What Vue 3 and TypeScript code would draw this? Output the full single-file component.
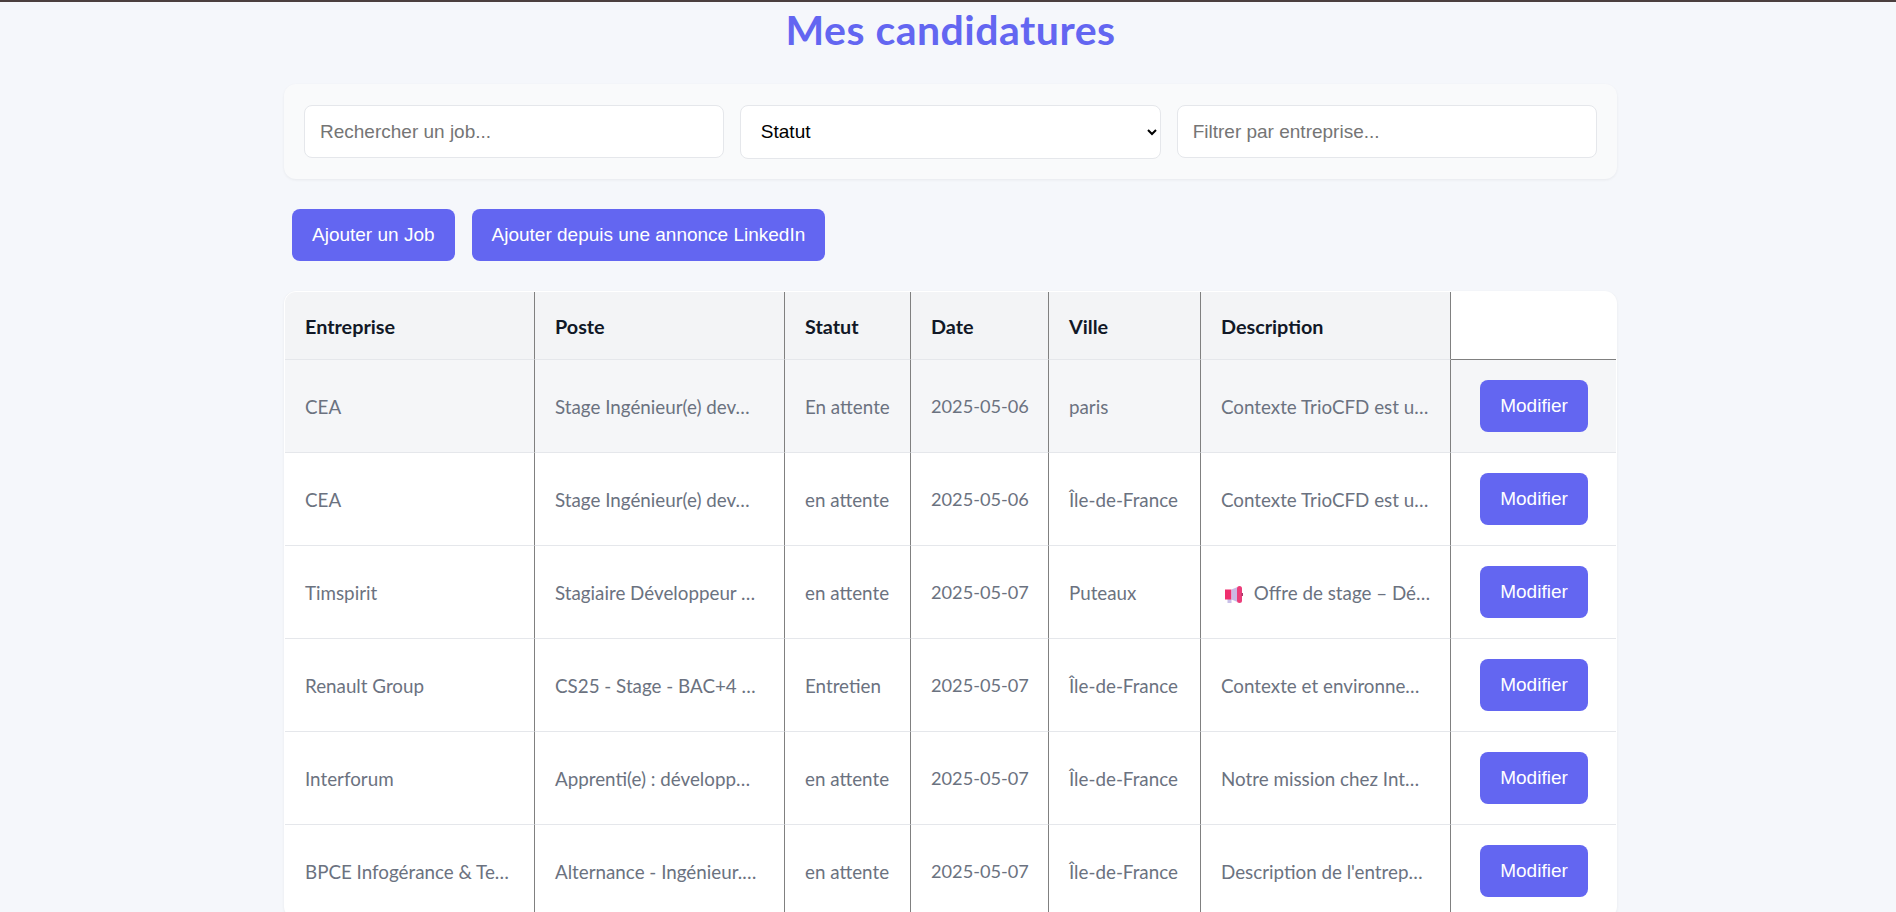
<script setup lang="ts">
interface Job { company: string; role: string; status: string; date: string; city: string; desc: string; icon?: boolean }
const jobs: Job[] = [
  { company: 'CEA', role: 'Stage Ingénieur(e) dev…', status: 'En attente', date: '2025-05-06', city: 'paris', desc: 'Contexte TrioCFD est u…' },
  { company: 'CEA', role: 'Stage Ingénieur(e) dev…', status: 'en attente', date: '2025-05-06', city: 'Île-de-France', desc: 'Contexte TrioCFD est u…' },
  { company: 'Timspirit', role: 'Stagiaire Développeur …', status: 'en attente', date: '2025-05-07', city: 'Puteaux', desc: 'Offre de stage – Dé…', icon: true },
  { company: 'Renault Group', role: 'CS25 - Stage - BAC+4 …', status: 'Entretien', date: '2025-05-07', city: 'Île-de-France', desc: 'Contexte et environne…' },
  { company: 'Interforum', role: 'Apprenti(e) : développ…', status: 'en attente', date: '2025-05-07', city: 'Île-de-France', desc: 'Notre mission chez Int…' },
  { company: 'BPCE Infogérance & Te…', role: 'Alternance - Ingénieur.…', status: 'en attente', date: '2025-05-07', city: 'Île-de-France', desc: "Description de l'entrep…" },
]
</script>

<template>
  <div class="page">
    <div class="topline"></div>
    <h1 class="title">Mes candidatures</h1>
    <main class="wrap">
      <section class="filters">
        <input class="field" type="text" placeholder="Rechercher un job..." />
        <select class="field select">
          <option>Statut</option>
          <option>En attente</option>
          <option>Entretien</option>
        </select>
        <input class="field" type="text" placeholder="Filtrer par entreprise..." />
      </section>
      <div class="actions">
        <button class="btn" type="button">Ajouter un Job</button>
        <button class="btn" type="button">Ajouter depuis une annonce LinkedIn</button>
      </div>
      <div class="table-card">
        <table class="jobs">
          <colgroup>
            <col class="c1" /><col class="c2" /><col class="c3" /><col class="c4" /><col class="c5" /><col class="c6" /><col class="c7" />
          </colgroup>
          <thead>
            <tr>
              <th>Entreprise</th><th>Poste</th><th>Statut</th><th>Date</th><th>Ville</th><th>Description</th><th class="blank"></th>
            </tr>
          </thead>
          <tbody>
            <tr v-for="(job, i) in jobs" :key="i" :class="{ shaded: i === 0 }">
              <td>{{ job.company }}</td>
              <td>{{ job.role }}</td>
              <td>{{ job.status }}</td>
              <td class="date">{{ job.date }}</td>
              <td>{{ job.city }}</td>
              <td>
                <svg v-if="job.icon" class="horn" viewBox="0 0 18 17" aria-hidden="true">
                  <rect x="2.5" y="13" width="4" height="4" fill="#c9c0e8" />
                  <rect x="0" y="3.5" width="6.5" height="10" fill="#ef2f6e" />
                  <path d="M6.5 3.5L12.5 1V16L6.5 13.5Z" fill="#cbb8e4" />
                  <rect x="12" y="0" width="5" height="17" rx="2.5" fill="#ec3d7a" />
                  <rect x="16.5" y="7" width="1.5" height="3" fill="#a83a6a" />
                </svg>
                {{ job.desc }}
              </td>
              <td class="cta"><button class="btn" type="button">Modifier</button></td>
            </tr>
          </tbody>
        </table>
      </div>
    </main>
  </div>
</template>

<style scoped>
.page {
  height: 912px;
  overflow: hidden;
  background: #f5f7fb;
  font-family: Lato, "Open Sans", sans-serif;
}
.topline { height: 2px; background: #4b3f3f; }
.title {
  margin: 0;
  padding: 2px 0 0 5px;
  text-align: center;
  color: #6366f1;
  font-size: 41px;
  line-height: 52px;
  font-weight: 700;
  letter-spacing: 0.5px;
}
.wrap { width: 1333px; margin: 28px 0 0 284px; }
.filters {
  display: flex;
  align-items: center;
  gap: 15.5px;
  height: 95px;
  padding: 0 20px;
  box-sizing: border-box;
  background: #f9fafb;
  border-radius: 12px;
  box-shadow: 0 1px 3px rgba(0, 0, 0, 0.06);
}
.field {
  flex: 1 1 0;
  min-width: 0;
  height: 53px;
  box-sizing: border-box;
  padding: 0 15px;
  background: #fff;
  border: 1px solid #e5e7eb;
  border-radius: 8px;
  font: 19px "Liberation Sans", Arial, sans-serif;
  color: #000;
  outline: none;
}
.field::placeholder { color: #757575; opacity: 1; }
.select { height: 54px; padding-left: 16px; }
.actions { display: flex; gap: 17px; margin: 30px 0 30px 8px; }
.btn {
  height: 52px;
  padding: 0 20px;
  border: 0;
  border-radius: 8px;
  background: #6366f1;
  color: #fff;
  font: 19px "Liberation Sans", Arial, sans-serif;
}
.table-card {
  background: #fff;
  border: 1px solid #fff;
  border-radius: 12px;
  overflow: hidden;
  box-shadow: 0 1px 3px rgba(0, 0, 0, 0.06);
}
.jobs { width: 1331px; table-layout: fixed; border-collapse: separate; border-spacing: 0; font-size: 18.8px; }
.c1 { width: 250px; } .c2 { width: 250px; } .c3 { width: 126px; } .c4 { width: 138px; }
.c5 { width: 152px; } .c6 { width: 250px; } .c7 { width: 165px; }
th, td {
  padding: 0 20px;
  text-align: left;
  white-space: nowrap;
  border-right: 1px solid #808080;
  border-bottom: 1px solid #e5e7eb;
}
th:last-child, td:last-child { border-right: 0; }
th {
  height: 67px;
  background: #f3f4f6;
  color: #111827;
  font-size: 19.8px;
  font-weight: 700;
}
th.blank { background: #fff; border-bottom-color: #808080; }
td { height: 92px; color: #6b7280; }
td.date { font-size: 18.2px; }
.shaded td { background: #f5f6f8; }
.horn { width: 18px; height: 17px; margin: 0 6px 0 4px; vertical-align: -3px; }
.cta { padding: 0 28px 0 29px; }
.cta .btn { width: 108px; padding: 0; display: block; }
</style>
